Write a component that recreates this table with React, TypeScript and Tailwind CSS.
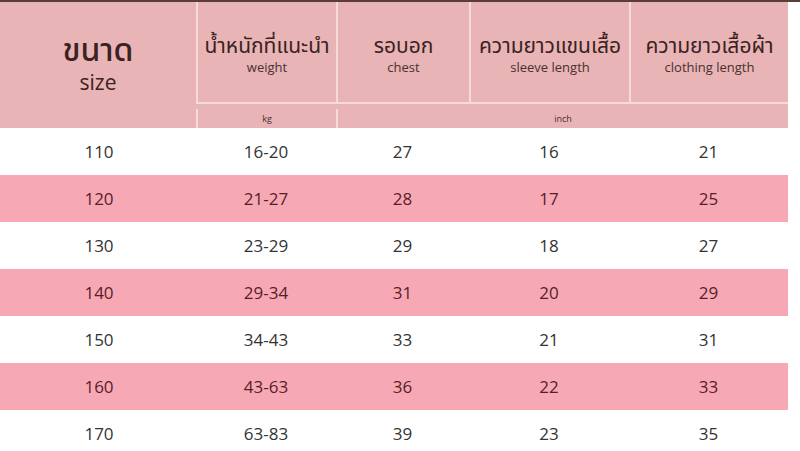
const rows = [
  ['110', '16-20', '27', '16', '21'],
  ['120', '21-27', '28', '17', '25'],
  ['130', '23-29', '29', '18', '27'],
  ['140', '29-34', '31', '20', '29'],
  ['150', '34-43', '33', '21', '31'],
  ['160', '43-63', '36', '22', '33'],
  ['170', '63-83', '39', '23', '35'],
];

const heads = [
  { th: 'น้ำหนักที่แนะนำ', en: 'weight' },
  { th: 'รอบอก', en: 'chest' },
  { th: 'ความยาวแขนเสื้อ', en: 'sleeve length' },
  { th: 'ความยาวเสื้อผ้า', en: 'clothing length' },
];

const cols = 'grid grid-cols-[196px_140px_133px_160px_159px]';

export default function App() {
  return (
    <div
      className="w-[800px] h-[451px] overflow-hidden bg-white"
      style={{ fontFamily: '"Open Sans", "Noto Sans", "Noto Sans Thai", "Tahoma", sans-serif' }}
    >
      <div className="h-[2px] bg-[#5b3d38]" />
      {/* Header */}
      <div className={`${cols} w-[788px] h-[126px] bg-[#e8b4b5] text-[#3b2222]`}>
        <div className="row-span-2 flex flex-col items-center pt-[28px] leading-none">
          <span className="text-[32px] font-medium leading-[38px]">ขนาด</span>
          <span className="text-[21px] mt-[4px]">size</span>
        </div>
        {heads.map((h) => (
          <div
            key={h.en}
            className="h-[102px] border-l-2 border-b-2 border-[#f6dcd8] flex flex-col items-center pt-[30px] leading-none"
          >
            <span className="text-[21px] leading-[26px]">{h.th}</span>
            <span className="text-[13px] mt-[3px] text-[#4a3030]">{h.en}</span>
          </div>
        ))}
        <div className="border-l-2 border-[#f6dcd8] flex items-center justify-center text-[9px] text-[#4a3030]">
          kg
        </div>
        <div className="col-span-3 border-l-2 border-[#f6dcd8] flex items-center justify-center text-[9px] text-[#4a3030]">
          inch
        </div>
      </div>
      {/* Body */}
      {rows.map((r, i) => (
        <div
          key={r[0]}
          className={`${cols} w-[788px] h-[47px] items-center text-[17px] ${
            i % 2 === 1 ? 'bg-[#f6a9b5] text-[#5a1c28]' : 'bg-white text-[#333333]'
          }`}
        >
          {r.map((v, j) => (
            <div key={j} className={`text-center ${j === 0 ? 'pl-[2px]' : ''}`}>
              {v}
            </div>
          ))}
        </div>
      ))}
    </div>
  );
}
